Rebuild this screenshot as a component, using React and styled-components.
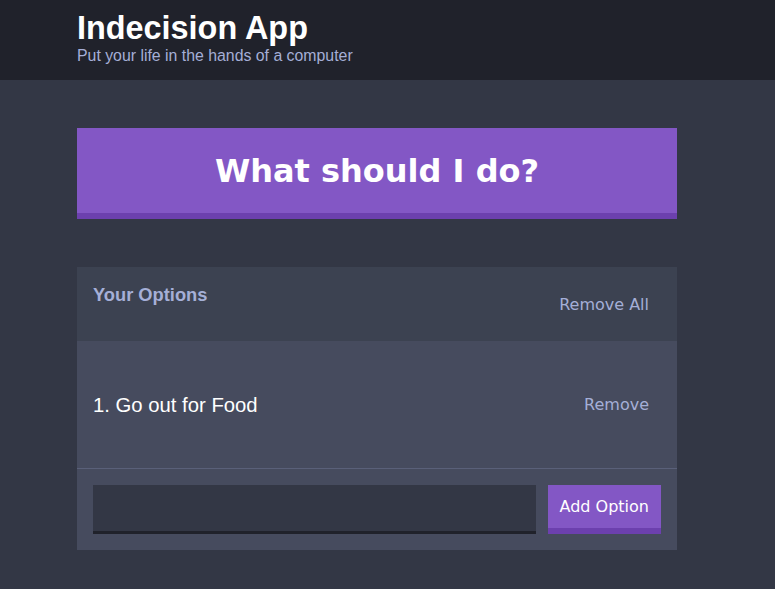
import styled, { createGlobalStyle } from "styled-components";

const colors = {
  offBlack: "#20222b",
  darkBlue: "#333745",
  blue: "#3c4251",
  lightBlue: "#464b5e",
  purple: "#8357c5",
  darkPurple: "#6c40ae",
  offWhite: "#a5afd7",
  line: "#5a6079",
};

const GlobalStyle = createGlobalStyle`
  html, body {
    margin: 0;
    background: ${colors.darkBlue};
  }
  body {
    font-family: "Liberation Sans", Arial, sans-serif;
    overflow: hidden;
  }
  * {
    box-sizing: border-box;
  }
`;

const Header = styled.header`
  background: ${colors.offBlack};
  padding: 10px 0 15px;
  margin-bottom: 48px;
`;

const Container = styled.div`
  width: 600px;
  margin-left: 77px;
`;

const Title = styled.h1`
  margin: 0;
  color: #fff;
  font-size: 32.4px;
  line-height: 37px;
  font-weight: bold;
`;

const Subtitle = styled.h2`
  margin: 0;
  color: ${colors.offWhite};
  font-size: 15.85px;
  line-height: 18px;
  font-weight: normal;
`;

const BigButton = styled.button`
  display: block;
  width: 100%;
  height: 91px;
  background: ${colors.purple};
  border: none;
  border-bottom: 6px solid ${colors.darkPurple};
  color: #fff;
  font-family: "DejaVu Sans", sans-serif;
  font-weight: bold;
  font-size: 32px;
  padding: 0 24px;
  margin-bottom: 48px;
  cursor: pointer;
`;

const Widget = styled.div`
  background: ${colors.lightBlue};
`;

const WidgetHeader = styled.div`
  display: flex;
  justify-content: space-between;
  align-items: center;
  background: ${colors.blue};
  padding: 16px;
`;

const WidgetTitle = styled.h3`
  margin: 1px 0 20px;
  color: ${colors.offWhite};
  font-size: 18.3px;
  line-height: 21px;
  font-weight: bold;
`;

const LinkButton = styled.button`
  background: none;
  border: none;
  color: ${colors.offWhite};
  font-family: "DejaVu Sans", sans-serif;
  font-size: 16px;
  padding: 0 12px;
  cursor: pointer;
`;

const Option = styled.div`
  display: flex;
  justify-content: space-between;
  align-items: center;
  padding: 32px 16px;
  border-bottom: 1px solid ${colors.line};
`;

const OptionText = styled.p`
  margin: 21px 0 19px;
  color: #fff;
  font-size: 20.3px;
  line-height: 23px;
`;

const AddForm = styled.form`
  display: flex;
  padding: 16px;
`;

const Input = styled.input`
  flex-grow: 1;
  margin-right: 12px;
  background: ${colors.darkBlue};
  border: none;
  border-bottom: 3px solid ${colors.offBlack};
  color: ${colors.offWhite};
  font-size: 16px;
  padding: 8px 12px;
  outline: none;
`;

const Button = styled.button`
  height: 49px;
  background: ${colors.purple};
  border: none;
  border-bottom: 6px solid ${colors.darkPurple};
  color: #fff;
  font-family: "DejaVu Sans", sans-serif;
  font-size: 16px;
  padding: 0 12px;
  cursor: pointer;
`;

const options = ["Go out for Food"];

export default function App() {
  return (
    <>
      <GlobalStyle />
      <Header>
        <Container>
          <Title>Indecision App</Title>
          <Subtitle>Put your life in the hands of a computer</Subtitle>
        </Container>
      </Header>
      <Container>
        <BigButton>What should I do?</BigButton>
        <Widget>
          <WidgetHeader>
            <WidgetTitle>Your Options</WidgetTitle>
            <LinkButton>Remove All</LinkButton>
          </WidgetHeader>
          {options.map((option, index) => (
            <Option key={option}>
              <OptionText>
                {index + 1}. {option}
              </OptionText>
              <LinkButton>Remove</LinkButton>
            </Option>
          ))}
          <AddForm onSubmit={(e) => e.preventDefault()}>
            <Input type="text" name="option" />
            <Button>Add Option</Button>
          </AddForm>
        </Widget>
      </Container>
    </>
  );
}
